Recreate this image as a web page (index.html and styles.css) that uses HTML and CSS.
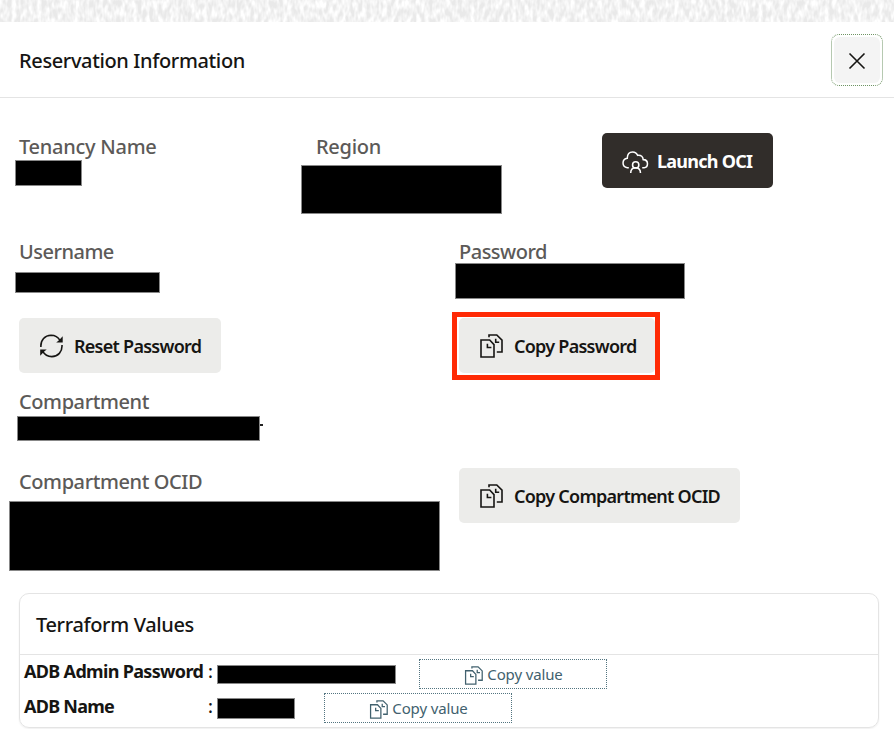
FILE: index.html
```
<!DOCTYPE html>
<html lang="en">
<head>
<meta charset="utf-8">
<title>Reservation Information</title>
<link rel="stylesheet" href="styles.css">
</head>
<body>
<svg class="defs" width="0" height="0" aria-hidden="true">
  <symbol id="copy" viewBox="0 0 24 24">
    <path d="M2 6h8.700l4.300 4.600V23H2zM8.400 9.800v3.700h4M10 3.200V1h7.800L23 6.200V18h-5.200M16.700 4.800v3.500h3.500"/>
  </symbol>
</svg>
<svg class="texture" width="894" height="22" aria-hidden="true">
  <filter id="grain" x="0" y="0" width="100%" height="100%">
    <feTurbulence type="fractalNoise" baseFrequency="0.24 0.11" numOctaves="2" seed="4"/>
    <feColorMatrix values="0 0 0 0 1  0 0 0 0 1  0 0 0 0 1  2.600 0 0 0 -0.850"/>
  </filter>
  <rect width="894" height="22" fill="#e9e9e9"/>
  <rect width="894" height="22" filter="url(#grain)"/>
</svg>
<header class="header">
  <h1 class="title">Reservation Information</h1>
  <button class="close" aria-label="Close"><span><svg width="18" height="18" viewBox="0 0 18 18"><path d="M1.500 1.500l15 15M16.500 1.500l-15 15"/></svg></span></button>
</header>
<main class="body">
  <section class="row row-tenancy">
    <div class="field tenancy"><h2 class="label loose">Tenancy Name</h2><div class="mask mask-tenancy"></div></div>
    <div class="field region"><h2 class="label loose">Region</h2><div class="mask mask-region"></div></div>
    <button class="btn dark launch"><svg class="icon cloud" viewBox="0 0 28 24"><path d="M7 17.500H5.500C2.800 17 1 15 1 12.500c0-2.600 1.700-4.700 4.400-5C5.500 3.800 7.500 1 11 1c2.600 0 4.300 1.300 5.300 3.500 3.600-.5 5.700 1.700 5.700 4.500 3 .1 4.500 2 4.500 4.300s-1.500 4-3.500 4.200h-2M9 23c0-3.500 2-5.500 5-5.500s5.200 2 5.200 5.500"/><circle cx="14.200" cy="14.500" r="3.300"/></svg><span>Launch OCI</span></button>
  </section>
  <section class="row row-user">
    <div class="field half"><h2 class="label tight">Username</h2><div class="mask mask-user"></div></div>
    <div class="field"><h2 class="label tight">Password</h2><div class="mask mask-pass"></div></div>
  </section>
  <section class="row row-actions">
    <div class="half"><button class="btn reset"><svg class="icon" viewBox="0 0 24 24"><path d="M1.900 13C1.500 5.800 6 1.600 12 1.300c4.300 0 7.200 2 9.200 5.500M23 11c.4 7-4 11.400-10.200 11.600-4.300 0-7.200-2-9.200-5.500"/><path class="solid" d="M23.700 2.200v6.300h-6.500l2.500-2zM1.200 21.800v-6.300h6.500l-2.500 2z"/></svg><span>Reset Password</span></button></div>
    <div class="highlight"><button class="btn copy-pass"><svg class="icon"><use href="#copy"/></svg><span>Copy Password</span></button></div>
  </section>
  <section class="row row-compartment">
    <div class="field"><h2 class="label">Compartment</h2><div class="masked-line"><div class="mask mask-comp"></div><i class="tick"></i></div></div>
  </section>
  <section class="row row-ocid">
    <div class="field half"><h2 class="label">Compartment OCID</h2><div class="mask mask-ocid"></div></div>
    <button class="btn copy-ocid"><svg class="icon"><use href="#copy"/></svg><span>Copy Compartment OCID</span></button>
  </section>
  <section class="card">
    <h2 class="card-title">Terraform Values</h2>
    <div class="value-row first"><b class="key">ADB Admin Password</b><b class="colon">:</b><div class="mask mask-adbp"></div><button class="copy-value"><svg class="small-icon"><use href="#copy"/></svg><span>Copy value</span></button></div>
    <div class="value-row second"><b class="key">ADB Name</b><b class="colon">:</b><div class="mask mask-adbn"></div><button class="copy-value"><svg class="small-icon"><use href="#copy"/></svg><span>Copy value</span></button></div>
  </section>
</main>
</body>
</html>
```
FILE: styles.css
```
* { box-sizing: border-box; }
body { margin: 0; width: 894px; height: 729px; overflow: hidden; background: #fff; color: #161513; font-family: "Noto Sans", "Open Sans", sans-serif; }
h1, h2 { margin: 0; font-weight: 500; }
button { font: inherit; color: inherit; margin: 0; padding: 0; border: 0; }
span, b { white-space: nowrap; }
svg { fill: none; stroke: currentColor; stroke-width: 1.6; flex: none; }
.defs { position: absolute; }
.texture { display: block; stroke: none; }
.header { height: 76px; border-bottom: 1px solid #e4e4e4; padding: 0 11px 0 19px; display: flex; align-items: center; justify-content: space-between; }
.title { font-size: 20px; line-height: 28px; padding-top: 2px; letter-spacing: -.37px; }
.close { width: 52px; height: 52px; border: 1px dotted #6f9464; border-radius: 8px; background: #fff; padding: 2px; }
.close span { display: grid; place-items: center; width: 46px; height: 46px; padding-top: 2px; border-radius: 6px; background: #f4f4f4; }
.body { padding: 35px 15px 0 19px; }
.row { display: flex; align-items: flex-start; }
.row-tenancy { height: 107px; }
.row-user { height: 78px; }
.row-actions { height: 72px; }
.row-compartment { height: 78px; }
.row-ocid { height: 125px; }
.label { color: #5c5a58; font-size: 20px; line-height: 24px; white-space: nowrap; letter-spacing: -.41px; }
.label.loose { letter-spacing: -.27px; }
.label.tight { letter-spacing: -.5px; }
.tenancy { width: 297px; padding-top: 2px; }
.region { width: 286px; padding-top: 2px; }
.half { width: 440px; }
.mask { background: #000; border: 1px solid #888; flex: none; }
.mask-tenancy { width: 67px; height: 26px; margin: 1px 0 0 -4px; }
.mask-region { width: 201px; height: 49px; margin: 6px 0 0 -15px; }
.mask-user { width: 145px; height: 21px; margin: 8px 0 0 -4px; }
.mask-pass { width: 230px; height: 36px; margin: -1px 0 0 -4px; }
.mask-comp { width: 243px; height: 25px; }
.masked-line { display: flex; margin: 2px 0 0 -2px; }
.tick { width: 3px; height: 2px; margin-top: 8px; background: #222; }
.mask-ocid { width: 431px; height: 70px; margin: 7px 0 0 -10px; }
.row-ocid .half { padding-top: 2px; }
.btn { display: flex; align-items: center; height: 55px; border-radius: 5px; background: #ececea; padding-left: 20px; font-size: 18px; font-weight: 600; line-height: 28px; letter-spacing: -.74px; }
.btn .icon { width: 24px; height: 24px; margin-right: 11px; }
.btn.dark { background: #312d2a; color: #fff; font-weight: 700; width: 171px; }
.btn .cloud { width: 27px; height: 23px; margin-right: 8px; margin-top: 4px; }
.solid { fill: currentColor; stroke: none; }
.reset { width: 202px; }
.copy-pass { width: 196px; }
.highlight { width: 208px; height: 68px; border: 5px solid #ff2a05; margin: -6px 0 0 -7px; padding: 1px 0 0 2px; }
.copy-ocid { width: 281px; }
.card { width: 860px; height: 135px; border: 1px solid #e4e4e4; border-radius: 10px; box-shadow: 0 1px 2px #0001; }
.card-title { height: 61px; border-bottom: 1px solid #e4e4e4; padding: 17px 0 0 16px; font-size: 20px; line-height: 28px; letter-spacing: -.36px; }
.value-row { display: flex; align-items: flex-start; height: 34px; padding-left: 4px; font-size: 18px; line-height: 26px; }
.value-row .key { width: 183px; padding-top: 3px; letter-spacing: -.67px; }
.value-row.second .key { letter-spacing: -.75px; }
.value-row.second .key, .second .colon { padding-top: 4px; }
.colon { width: 10px; padding: 3px 0 0 1px; font-weight: 500; }
.mask-adbp { width: 179px; height: 19px; margin: 10px 23px 0 0; }
.mask-adbn { width: 78px; height: 21px; margin: 9px 29px 0 0; }
.copy-value { display: flex; align-items: center; justify-content: center; width: 188px; height: 30px; margin-top: 4px; border: 1px dotted #527480; background: #fff; color: #41616e; font-size: 15px; letter-spacing: -.13px; }
.small-icon { width: 19px; height: 19px; margin: 3px 4px 0 1px; }
```
